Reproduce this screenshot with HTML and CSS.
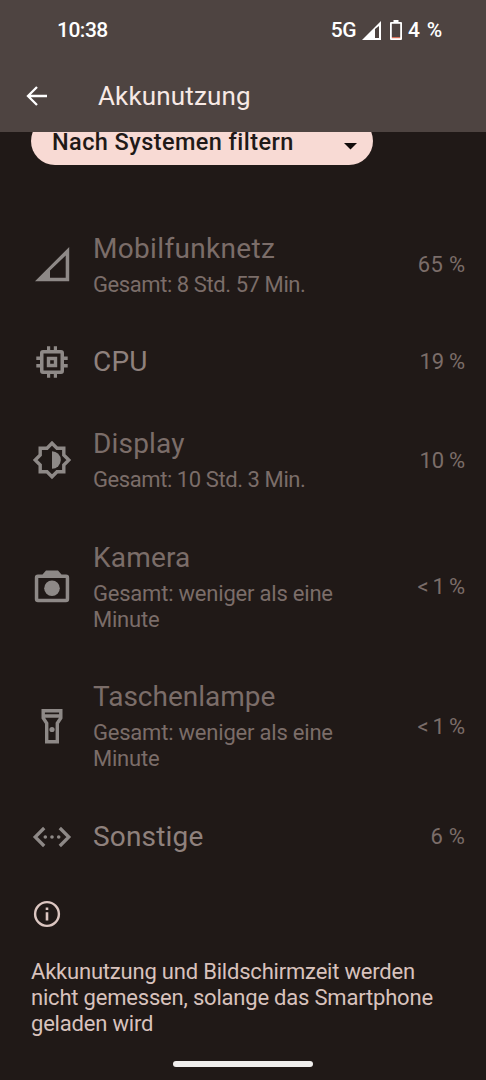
FILE: index.html
```html
<!DOCTYPE html>
<html lang="de">
<head>
<meta charset="utf-8">
<title>Akkunutzung</title>
<link rel="stylesheet" href="styles.css">
</head>
<body>
<header class="top">
  <div class="status">
    <span class="clock">10:38</span>
    <span class="net">5G</span>
    <svg class="signal" width="19" height="19" viewBox="0 0 19 19"><path d="M0 19L19 0V19ZM13 8V17H17V5Z" fill="#fff" fill-rule="evenodd"/></svg>
    <svg class="battery" width="12" height="20" viewBox="0 0 12 20"><path d="M3.500 0H8.500V2H11Q12 2 12 3V19Q12 20 11 20H1Q0 20 0 19V3Q0 2 1 2H3.500ZM1.800 3.800V17H10.200V3.800Z" fill="#fff" fill-rule="evenodd"/><path d="M1.800 17H10.200V18.200H1.800Z" fill="#d96f58"/></svg>
    <span class="level">4 %</span>
  </div>
  <div class="bar">
    <svg class="back" width="21" height="20" viewBox="0 0 21 20"><path d="M21 10H2M11 1L2 10L11 19" fill="none" stroke="#fff" stroke-width="2.300"/></svg>
    <h1 class="title">Akkunutzung</h1>
  </div>
</header>
<main class="content">
  <div class="filter"><span class="filter-label">Nach Systemen filtern</span>
    <svg width="13" height="7" viewBox="0 0 13 7"><path d="M0 0H13L6.500 6.500Z" fill="#120c0b"/></svg>
  </div>
  <ul class="list">
    <li class="row">
      <svg class="icon" width="40" height="40" viewBox="0 0 40 40"><path d="M3 36.200L37.200 2V36.200ZM18 25.500V32.700H33.700V10.500Z" fill-rule="evenodd"/></svg>
      <div class="text"><div class="name wide">Mobilfunknetz</div><div class="sub digits">Gesamt: 8 Std. 57 Min.</div></div>
      <span class="pct">65 %</span>
    </li>
    <li class="row single">
      <svg class="icon" width="40" height="40" viewBox="0 0 40 40"><path fill-rule="evenodd" d="M11 8H15V4.300H18.200V8H21.800V4.300H25V8H29Q32 8 32 11V14.500H35.700V18H32V22H35.700V25.500H32V29Q32 32 29 32H25V35.700H21.800V32H18.200V35.700H15V32H11Q8 32 8 29V25.500H4.300V22H8V18H4.300V14.500H8V11Q8 8 11 8ZM11.500 11.500V28.500H28.500V11.500ZM14.800 14.800H25.200V25.200H14.800ZM18.200 18.200V21.800H21.800V18.200Z"/></svg>
      <div class="text"><div class="name">CPU</div></div>
      <span class="pct one">19 %</span>
    </li>
    <li class="row">
      <svg class="icon" width="40" height="40" viewBox="0 0 40 40"><path d="M20 3.200L25 8.200H31.800V15L36.800 20L31.800 25V31.800H25L20 36.800L15 31.800H8.200V25L3.200 20L8.200 15V8.200H15Z" fill="none" stroke="currentColor" stroke-width="3.400"/><path d="M20 11.200A8.800 8.800 0 0 1 20 28.800Z"/></svg>
      <div class="text"><div class="name">Display</div><div class="sub digits">Gesamt: 10 Std. 3 Min.</div></div>
      <span class="pct one">10 %</span>
    </li>
    <li class="row">
      <svg class="icon" width="40" height="40" viewBox="0 0 40 40"><path fill-rule="evenodd" d="M6 7.500H10.500L14 3.500H26L29.500 7.500H34Q37.200 7.500 37.200 10.700V32Q37.200 35.200 34 35.200H6Q2.800 35.200 2.800 32V10.700Q2.800 7.500 6 7.500ZM6.300 11V31.700H33.700V11Z"/><circle cx="20" cy="21.300" r="7.800"/></svg>
      <div class="text"><div class="name">Kamera</div><div class="sub">Gesamt: weniger als eine Minute</div></div>
      <span class="pct less">&lt; 1 %</span>
    </li>
    <li class="row">
      <svg class="icon" width="40" height="40" viewBox="0 0 40 40"><path d="M11.200 4.700H28.800V12L25.300 17.300V35.800H14.700V17.300L11.200 12ZM10 10H30" fill="none" stroke="currentColor" stroke-width="3.400"/><circle cx="20" cy="23.500" r="2.600"/></svg>
      <div class="text"><div class="name even">Taschenlampe</div><div class="sub">Gesamt: weniger als eine Minute</div></div>
      <span class="pct less">&lt; 1 %</span>
    </li>
    <li class="row single">
      <svg class="icon" width="40" height="40" viewBox="0 0 40 40"><path d="M12.200 11L3.200 20L12.200 29M27.800 11L36.800 20L27.800 29" fill="none" stroke="currentColor" stroke-width="3.300"/><circle cx="13.300" cy="20" r="1.800"/><circle cx="20" cy="20" r="1.800"/><circle cx="26.700" cy="20" r="1.800"/></svg>
      <div class="text"><div class="name">Sonstige</div></div>
      <span class="pct">6 %</span>
    </li>
  </ul>
  <footer class="note">
    <svg width="28" height="28" viewBox="0 0 28 28"><circle cx="14" cy="14" r="11.900" fill="none" stroke="#dcc6c1" stroke-width="2.400"/><path d="M12.700 7.500H15.300V10.100H12.700ZM12.700 12.300H15.300V20.500H12.700Z" fill="#dcc6c1"/></svg>
    <p class="note-text">Akkunutzung und Bildschirmzeit werden<br>nicht gemessen, solange das Smartphone<br>geladen wird</p>
  </footer>
</main>
<div class="handle"></div>
</body>
</html>
```
FILE: styles.css
```css
* { box-sizing: border-box; }
body {
  margin: 0;
  height: 1080px;
  display: flex;
  flex-direction: column;
  background: #201917;
  font-family: Roboto, "Liberation Sans", sans-serif;
  overflow: hidden;
}
.top { height: 132px; flex: none; background: #4e4441; }
.status {
  height: 60px;
  display: flex;
  align-items: center;
  padding: 0 42px 0 57px;
  color: #fff;
  font-size: 21px;
  font-weight: 500;
  white-space: nowrap;
}
.clock { flex: 1; letter-spacing: -0.5px; }
.net { font-weight: 500; letter-spacing: -0.5px; }
.signal { margin: 1px 9px 0 6px; }
.battery { margin-right: 6px; }
.level { width: 36px; letter-spacing: 0.8px; }
.bar { height: 72px; display: flex; align-items: center; padding-left: 26px; }
.back { margin-right: 51px; }
.title {
  margin: 0;
  font-size: 26px;
  font-weight: 400;
  line-height: 32px;
  letter-spacing: 0.15px;
  color: #f7e9e5;
}
.content { flex: none; height: 915px; overflow: hidden; }
.filter {
  width: 342px;
  height: 48px;
  margin: -15px 0 0 31px;
  padding: 0 16px 0 21px;
  display: flex;
  align-items: center;
  justify-content: space-between;
  border-radius: 24px;
  background: #f8dad4;
  color: #201917;
  font-size: 23.5px;
}
.filter-label { line-height: 18px; margin-top: 2px; font-weight: 500; letter-spacing: 0.42px; }
.filter svg { margin-top: 10px; }
.list { margin: 42.5px 0 0; padding: 0; list-style: none; }
.row {
  display: flex;
  align-items: center;
  padding: 25px 21px 23.5px 31.7px;
  color: #7b6d69;
}
.single { padding-top: 21px; padding-bottom: 21px; }
.icon { flex: none; margin: -1px 21.3px 0 0; fill: currentColor; color: #8e8987; }
.single .icon { margin-top: 0; }
.text { flex: 1; }
.name { font-size: 28px; line-height: 32px; letter-spacing: 0.18px; }
.wide { letter-spacing: 0.33px; }
.even { letter-spacing: 0; }
.single .name { color: #8f817d; }
.sub { margin-top: 7px; font-size: 22px; line-height: 26px; width: 260px; letter-spacing: -0.21px; }
.digits { letter-spacing: -0.42px; }
.pct { font-size: 22px; line-height: 24px; white-space: nowrap; letter-spacing: 0.3px; margin-right: -0.3px; }
.one { letter-spacing: -0.3px; margin-right: 0.3px; }
.less { letter-spacing: 0; word-spacing: -1.5px; margin-right: 0; }
.note { padding: 22.5px 31px 0; }
.note svg { display: block; margin-left: 1.5px; }
.note-text {
  margin: 31px 0 0;
  font-size: 22px;
  line-height: 26px;
  letter-spacing: -0.2px;
  color: #d8c2bd;
  white-space: nowrap;
}
.handle {
  width: 140px;
  height: 6px;
  margin: 14px auto 0;
  border-radius: 3px;
  background: #f0eeed;
}
```
